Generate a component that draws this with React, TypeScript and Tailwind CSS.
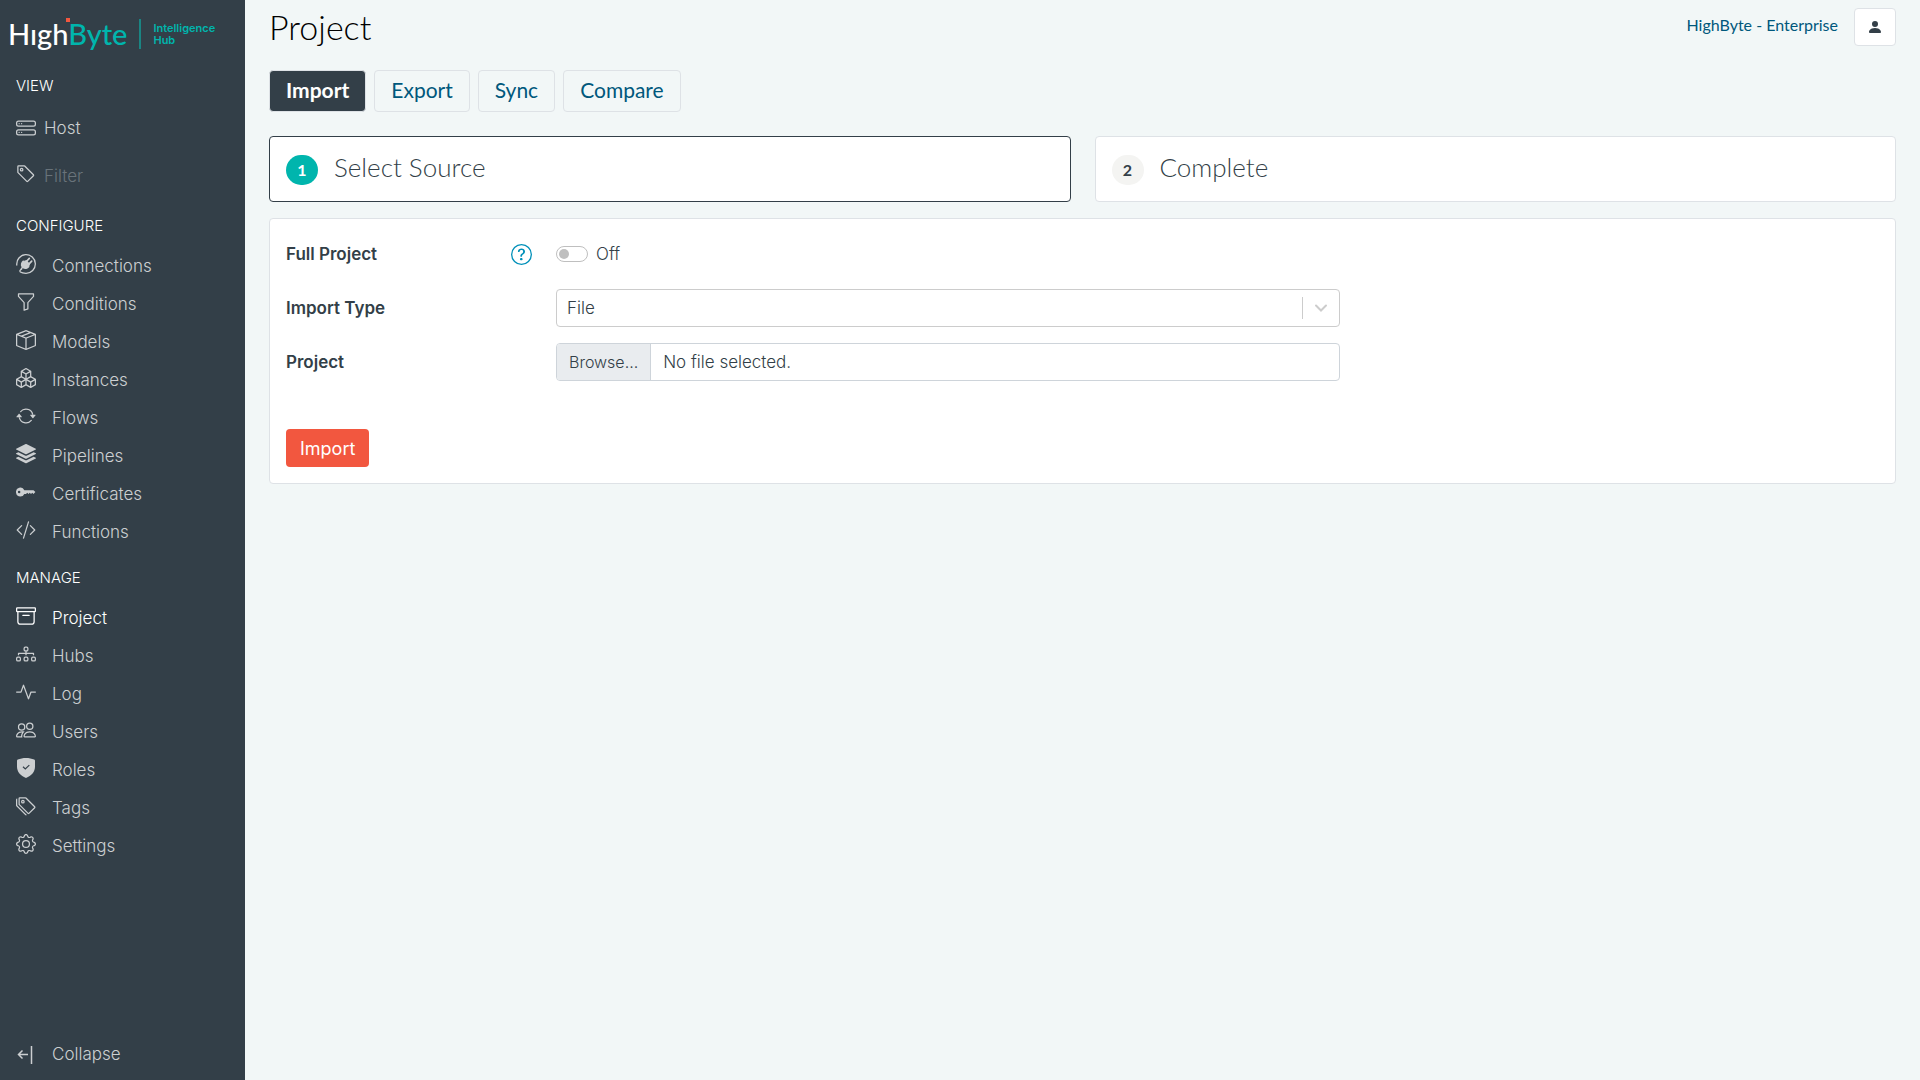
import { useState, type ReactNode } from "react";
import {
  BsActivity,
  BsArchive,
  BsArrowRepeat,
  BsBoxes,
  BsBoxSeam,
  BsCodeSlash,
  BsDiagram3,
  BsFunnel,
  BsGear,
  BsHddStack,
  BsKeyFill,
  BsPeople,
  BsPersonFill,
  BsQuestionCircle,
  BsStack,
  BsTag,
  BsTags,
} from "react-icons/bs";

type NavItem = { name: string; icon: ReactNode };

function PlugIcon() {
  return (
    <svg width="20" height="20" viewBox="0 0 20 20" fill="none" stroke="currentColor" strokeWidth="1.3">
      <path d="M.8 11A9.3 9.3 0 1 1 10 19.3c-2.4 0-4.300-.3-5.600-1.300-1-.9-.4-2.200 1.200-2.800" strokeLinecap="round" />
      <path d="M7.200 6.200l6.300 6.500c-1.800 2.500-4.700 2.900-6.600 1.600l-1.900 1.300-.6-.7 1.200-1.700c-1.500-2.200-.7-5.200 1.600-7z" fill="currentColor" stroke="none" />
      <path d="M10 8l3.300-3.600M12.400 10.600l3.300-3.400" strokeWidth="1.700" strokeLinecap="round" />
      <path d="M7.500 7l3-1 3.500 4-1 3z" fill="currentColor" stroke="none" />
    </svg>
  );
}

function ShieldIcon() {
  return (
    <svg width="20" height="20" viewBox="0 0 20 20" fill="none">
      <path d="M10 0c3 0 5.800.6 8.200 1.600.5.2.8.6.8 1.100v6.100c0 5-3.500 9-9 11.200C4.500 17.800 1 13.800 1 8.800V2.700c0-.5.3-.9.800-1.100C4.200.6 7 0 10 0z" fill="currentColor" />
      <path d="M7 8.800l2.300 2.200 4-3.900" stroke="#333f48" strokeWidth="1.200" />
    </svg>
  );
}

function CollapseIcon() {
  return (
    <svg width="20" height="20" viewBox="0 0 20 20" fill="none" stroke="currentColor" strokeWidth="1.500">
      <path d="M12 9.500H3M6.500 5.500L2.500 9.500l4 4" />
      <path d="M15.500 1v18" />
    </svg>
  );
}

const configure: NavItem[] = [
  { name: "Connections", icon: <PlugIcon /> },
  { name: "Conditions", icon: <BsFunnel /> },
  { name: "Models", icon: <BsBoxSeam /> },
  { name: "Instances", icon: <BsBoxes /> },
  { name: "Flows", icon: <BsArrowRepeat /> },
  { name: "Pipelines", icon: <BsStack /> },
  { name: "Certificates", icon: <BsKeyFill /> },
  { name: "Functions", icon: <BsCodeSlash /> },
];

const manage: NavItem[] = [
  { name: "Project", icon: <BsArchive /> },
  { name: "Hubs", icon: <BsDiagram3 /> },
  { name: "Log", icon: <BsActivity /> },
  { name: "Users", icon: <BsPeople /> },
  { name: "Roles", icon: <ShieldIcon /> },
  { name: "Tags", icon: <BsTags /> },
  { name: "Settings", icon: <BsGear /> },
];

const tabs = ["Import", "Export", "Sync", "Compare"];

function NavHeading({ children }: { children: ReactNode }) {
  return <h2 className="flex h-12 items-center px-4 pt-1 text-[15px] text-white">{children}</h2>;
}

function NavList({ items }: { items: NavItem[] }) {
  return (
    <ul>
      {items.map((item) => (
        <li key={item.name}>
          <a
            href="#"
            className={`flex h-[38px] items-center gap-4 px-4 hover:text-white ${
              item.name === "Project" ? "text-white" : "text-[#cccfd1]"
            }`}
          >
            <span className="pb-[6px] text-[20px]">{item.icon}</span>
            {item.name}
          </a>
        </li>
      ))}
    </ul>
  );
}

function Sidebar() {
  return (
    <aside className="flex w-[245px] shrink-0 flex-col bg-[#333f48] text-[17px] font-light text-[#cccfd1]">
      {/* Logo */}
      <a href="#" className="flex h-[60px] items-center pt-2 pl-2 font-['Lato',sans-serif]">
        <span className="relative text-[29px] leading-8 font-medium text-white">
          Hıgh<span className="text-[#00b5ad]">Byte</span>
          <span className="absolute top-0 left-[58px] size-1 bg-[#f2573f]" />
        </span>
        <span className="ml-3 h-[30px] border-l-2 border-[#1a8583]" />
        <span className="ml-3 font-['Inter',sans-serif] text-[11px] leading-3 font-semibold text-[#00b5ad]">
          Intelligence
          <br />
          Hub
        </span>
      </a>

      <nav>
        <NavHeading>VIEW</NavHeading>
        <a href="#" className="flex h-10 items-center gap-2 px-4 hover:text-white">
          <BsHddStack className="text-[20px]" />
          <span className="pt-[2px]">Host</span>
        </a>
        <label className="mt-2 flex h-10 items-center gap-2 px-4">
          <BsTag className="mb-1 shrink-0 text-[20px]" />
          <input
            type="text"
            aria-label="Filter"
            placeholder="Filter"
            className="w-full bg-transparent pt-[2px] outline-none placeholder:text-[#69737a]"
          />
        </label>

        <div className="mt-1">
          <NavHeading>CONFIGURE</NavHeading>
          <NavList items={configure} />
        </div>
        <NavHeading>MANAGE</NavHeading>
        <NavList items={manage} />
      </nav>

      <button type="button" className="mt-auto mb-[6px] flex h-[38px] items-center gap-4 px-4 hover:text-white">
        <CollapseIcon />
        Collapse
      </button>
    </aside>
  );
}

function Step({ number, title, active }: { number: number; title: string; active?: boolean }) {
  return (
    <li
      className={`flex h-[66px] flex-1 items-center gap-4 rounded border bg-white px-4 font-['Lato',sans-serif] ${
        active ? "border-[#333f48]" : "border-[#dee2e6]"
      }`}
    >
      <span
        className={`mt-[2px] flex h-[30px] w-8 items-center justify-center rounded-full text-base font-bold ${
          active ? "bg-[#00b5ad] text-white" : "bg-[#f4f4f2] text-[#333f48]"
        }`}
      >
        {number}
      </span>
      <span className="pb-1 text-[26px] font-light">{title}</span>
    </li>
  );
}

function Field({ label, htmlFor, help, children }: { label: string; htmlFor: string; help?: boolean; children: ReactNode }) {
  return (
    <div className="flex min-h-[38px] items-center">
      <div className="flex w-[270px] shrink-0 items-center justify-between pr-6">
        <label htmlFor={htmlFor} className="pt-[2px] font-semibold">
          {label}
        </label>
        {help && (
          <button type="button" aria-label="Help" className="text-[21px] text-[#0090b9]">
            <BsQuestionCircle />
          </button>
        )}
      </div>
      <div className="max-w-[784px] flex-1">{children}</div>
    </div>
  );
}

export default function App() {
  const [tab, setTab] = useState("Import");
  const [full, setFull] = useState(false);
  const [fileName, setFileName] = useState("");

  return (
    <div className="flex min-h-screen bg-[#f2f7f7] font-['Inter',sans-serif] text-[#333f48]">
      <Sidebar />

      <main className="min-w-0 flex-1 px-6 pt-2">
        <header className="flex h-[38px] items-center justify-between">
          <h1 className="font-['Lato',sans-serif] text-[34px] leading-8 font-light text-black">Project</h1>
          <div className="flex items-center gap-4">
            <a href="#" className="pb-1 font-['Lato',sans-serif] text-base text-[#00587c]">
              HighByte - Enterprise
            </a>
            <button
              type="button"
              aria-label="Account"
              className="flex h-[38px] w-[42px] items-center justify-center rounded border border-[#dee2e6] bg-white"
            >
              <BsPersonFill className="text-base" />
            </button>
          </div>
        </header>

        {/* Tabs */}
        <div role="tablist" className="mt-6 flex gap-2 font-['Lato',sans-serif] text-[21px]">
          {tabs.map((t) => (
            <button
              key={t}
              type="button"
              role="tab"
              aria-selected={tab === t}
              onClick={() => setTab(t)}
              className={`h-[42px] rounded border border-[#dee2e6] px-4 pb-[2px] ${
                tab === t ? "bg-[#333f48] font-bold text-white" : "text-[#00587c]"
              }`}
            >
              {t}
            </button>
          ))}
        </div>

        {/* Steps */}
        <ol className="mt-6 flex gap-6">
          <Step number={1} title="Select Source" active />
          <Step number={2} title="Complete" />
        </ol>

        <form
          className="mt-4 flex flex-col gap-4 rounded border border-[#dee2e6] bg-white p-4 text-[17px]"
          onSubmit={(e) => e.preventDefault()}
        >
          <Field label="Full Project" htmlFor="full-project" help>
            <div className="flex items-center gap-2 font-light">
              <input
                id="full-project"
                type="checkbox"
                role="switch"
                checked={full}
                onChange={(e) => setFull(e.target.checked)}
                className="h-4 w-8 appearance-none rounded-full border border-[#bfbfbf] bg-white p-[2px] before:block before:size-[10px] before:rounded-full before:bg-[#bfbfbf] checked:before:ml-4"
              />
              <span className="pt-[2px]">{full ? "On" : "Off"}</span>
            </div>
          </Field>

          <Field label="Import Type" htmlFor="import-type">
            <div className="relative">
              <select
                id="import-type"
                className="h-[38px] w-full appearance-none rounded border border-[#cccccc] bg-white px-[10px] pt-[2px] font-light"
              >
                <option>File</option>
              </select>
              <span className="pointer-events-none absolute inset-y-2 right-0 flex w-[38px] items-center justify-center border-l border-[#cccccc] text-[#cccccc]">
                <svg width="16" height="14" viewBox="0 0 16 14" fill="none" stroke="currentColor" strokeWidth="2">
                  <path d="M2 4.500l5 5 5-5" strokeLinecap="round" />
                </svg>
              </span>
            </div>
          </Field>

          <Field label="Project" htmlFor="project-file">
            <label
              htmlFor="project-file"
              className="flex h-[38px] overflow-hidden rounded border border-[#ced4da] bg-white font-light"
            >
              <span className="flex items-center border-r border-[#ced4da] bg-[#e9ecef] px-3 text-base">
                Browse...
              </span>
              <span className="flex items-center px-3 pt-[2px]">{fileName || "No file selected."}</span>
              <input
                id="project-file"
                type="file"
                className="sr-only"
                onChange={(e) => setFileName(e.target.files?.[0]?.name ?? "")}
              />
            </label>
          </Field>

          <button
            type="submit"
            className="mt-8 h-[38px] self-start rounded bg-[#f2573f] px-[14px] pt-[2px] text-lg text-white"
          >
            Import
          </button>
        </form>
      </main>
    </div>
  );
}
